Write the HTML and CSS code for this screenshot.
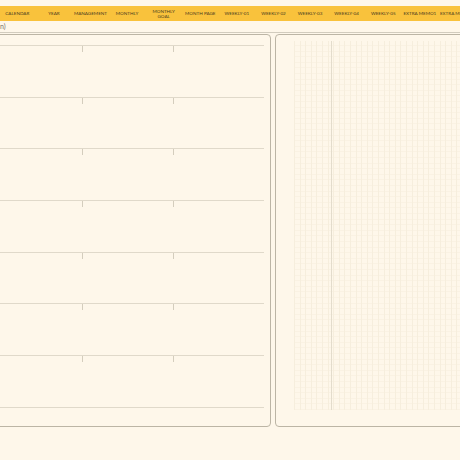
FILE: index.html
```html
<!DOCTYPE html>
<html lang="en">
<head>
    <meta charset="UTF-8">
    <meta name="viewport" content="width=device-width, initial-scale=1.0">
    <title>Planner</title>
    <link rel="stylesheet" href="styles.css">
</head>
<body>
    <nav class="tabs">
        <div class="tab">CALENDAR</div>
        <div class="tab">YEAR</div>
        <div class="tab">MANAGEMENT</div>
        <div class="tab">MONTHLY</div>
        <div class="tab">MONTHLY<br>GOAL</div>
        <div class="tab">MONTH PAGE</div>
        <div class="tab">WEEKLY-01</div>
        <div class="tab">WEEKLY-02</div>
        <div class="tab">WEEKLY-03</div>
        <div class="tab">WEEKLY-04</div>
        <div class="tab">WEEKLY-05</div>
        <div class="tab">EXTRA MEMO1</div>
        <div class="tab">EXTRA MEMO2</div>
    </nav>

    <div class="title">n)</div>

    <main class="pages">
        <section class="page left">
            <div class="row"><div></div><div><i class="tick"></i></div><div><i class="tick"></i></div></div>
            <div class="row"><div></div><div><i class="tick"></i></div><div><i class="tick"></i></div></div>
            <div class="row"><div></div><div><i class="tick"></i></div><div><i class="tick"></i></div></div>
            <div class="row"><div></div><div><i class="tick"></i></div><div><i class="tick"></i></div></div>
            <div class="row"><div></div><div><i class="tick"></i></div><div><i class="tick"></i></div></div>
            <div class="row"><div></div><div><i class="tick"></i></div><div><i class="tick"></i></div></div>
            <div class="row"><div></div><div><i class="tick"></i></div><div><i class="tick"></i></div></div>
            <div class="row last"></div>
        </section>

        <section class="page right">
            <div class="grid">
                <div class="margin"></div>
                <div class="notes"></div>
            </div>
        </section>
    </main>
</body>
</html>
```

FILE: styles.css
```css
* {
    margin: 0;
    padding: 0;
    box-sizing: border-box;
}
body {
    background-color: #fef7ea;
    font-family: Lato, "Liberation Sans", sans-serif;
    width: 460px;
    height: 460px;
    overflow: hidden;
    padding-top: 6px;
}

/* top tab strip */
.tabs {
    display: flex;
    background-color: #f9c23c;
    height: 15px;
    margin-left: -1px;
    overflow: hidden;
}
.tab {
    flex: 0 0 36.6px;
    display: flex;
    align-items: center;
    justify-content: center;
    text-align: center;
    font-size: 4.6px;
    line-height: 5px;
    color: #4a3c20;
    white-space: nowrap;
}

.title {
    height: 12px;
    border-bottom: 1px solid #d2ccbe;
    font-size: 7px;
    line-height: 11px;
    color: #77726a;
}

/* two facing pages */
.pages {
    display: flex;
    gap: 4px;
    margin-top: 1px;
    margin-left: -20px;
    height: 393px;
}
.page {
    border: 1.5px solid #bcb5a5;
    border-radius: 4px;
    background-color: #fef7ea;
}
.left {
    flex: 0 0 291px;
    padding: 10px 6px 0 7px;
}
.right {
    flex: 0 0 220px;
    padding: 6px 0 0 18px;
}

.row {
    display: grid;
    grid-template-columns: 94px 91px 1fr;
    height: 51.7px;
    border-top: 1px solid #e0d9ca;
}
.row.last {
    display: block;
}
.tick {
    display: block;
    width: 1px;
    height: 6px;
    background-color: #d4cdbd;
}

/* dot grid memo */
.grid {
    display: flex;
    height: 369px;
    background-image:
        repeating-linear-gradient(90deg, #f6eedd 0 1px, transparent 1px 5.6px),
        repeating-linear-gradient(0deg, #faf2e3 0 1px, transparent 1px 5.6px);
}
.margin {
    flex: 0 0 38px;
    border-right: 1.5px solid #e3dccc;
}
.notes {
    flex: 1;
}
```
